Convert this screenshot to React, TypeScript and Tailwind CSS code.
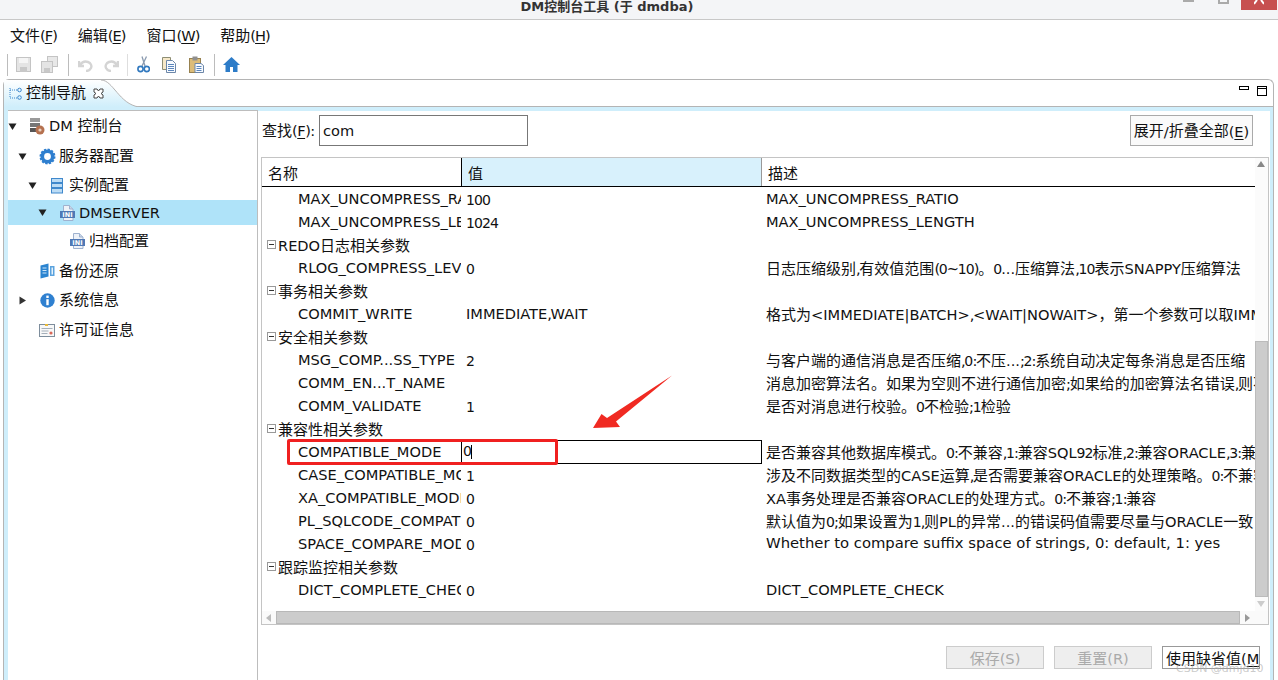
import type { ReactNode } from 'react';

const FONT = "font-['DejaVu_Sans','Noto_Sans_CJK_SC',sans-serif]";

type Row =
  | { group: string }
  | { name: string; value?: string; desc?: string; editing?: boolean };

const rows: Row[] = [
  { name: 'MAX_UNCOMPRESS_RATIO', value: '100', desc: 'MAX_UNCOMPRESS_RATIO' },
  { name: 'MAX_UNCOMPRESS_LENGTH', value: '1024', desc: 'MAX_UNCOMPRESS_LENGTH' },
  { group: 'REDO日志相关参数' },
  { name: 'RLOG_COMPRESS_LEVEL', value: '0', desc: '日志压缩级别,有效值范围(0~10)。0...压缩算法,10表示SNAPPY压缩算法' },
  { group: '事务相关参数' },
  { name: 'COMMIT_WRITE', value: 'IMMEDIATE,WAIT', desc: '格式为<IMMEDIATE|BATCH>,<WAIT|NOWAIT>，第一个参数可以取IMMEDIATE或BATCH' },
  { group: '安全相关参数' },
  { name: 'MSG_COMP...SS_TYPE', value: '2', desc: '与客户端的通信消息是否压缩,0:不压...;2:系统自动决定每条消息是否压缩' },
  { name: 'COMM_EN...T_NAME', value: '', desc: '消息加密算法名。如果为空则不进行通信加密;如果给的加密算法名错误,则不进行加密' },
  { name: 'COMM_VALIDATE', value: '1', desc: '是否对消息进行校验。0不检验;1检验' },
  { group: '兼容性相关参数' },
  { name: 'COMPATIBLE_MODE', value: '0', desc: '是否兼容其他数据库模式。0:不兼容,1:兼容SQL92标准,2:兼容ORACLE,3:兼容MS SQL SERVER', editing: true },
  { name: 'CASE_COMPATIBLE_MODE', value: '1', desc: '涉及不同数据类型的CASE运算,是否需要兼容ORACLE的处理策略。0:不兼容;1:兼容' },
  { name: 'XA_COMPATIBLE_MODE', value: '0', desc: 'XA事务处理是否兼容ORACLE的处理方式。0:不兼容;1:兼容' },
  { name: 'PL_SQLCODE_COMPATIBLE', value: '0', desc: '默认值为0;如果设置为1,则PL的异常...的错误码值需要尽量与ORACLE一致' },
  { name: 'SPACE_COMPARE_MODE', value: '0', desc: 'Whether to compare suffix space of strings, 0: default, 1: yes' },
  { group: '跟踪监控相关参数' },
  { name: 'DICT_COMPLETE_CHECK', value: '0', desc: 'DICT_COMPLETE_CHECK' },
];

const HAN = /[\u4e00-\u9fff]/;

// hanzi run at 15px, digits and punctuation narrow, the rest at the base size
function Txt({ s }: { s: string }) {
  const parts = s.split(/([\u4e00-\u9fff。，]+|[0-9]+|[,;:~()]+)/).filter(Boolean);
  return (
    <>
      {parts.map((p, i) =>
        /^[0-9]/.test(p) ? (
          <span key={i} className="text-[14px] tracking-[-0.9px]">{p}</span>
        ) : /^[,;:~()]/.test(p) ? (
          <span key={i} className="tracking-[-1.300px]">{p}</span>
        ) : /^[\u4e00-\u9fff。，]/.test(p) ? (
          <span key={i} className="text-[15px]">{p}</span>
        ) : (
          <span key={i}>{p}</span>
        ),
      )}
    </>
  );
}

function Key({ c }: { c: string }) {
  return <span className="underline underline-offset-2">{c}</span>;
}

function MenuItem({ label, k }: { label: string; k: string }) {
  return (
    <span>
      <span className="text-[15px]">{label}</span>
      <span className="tracking-[-1px]">(<Key c={k} />)</span>
    </span>
  );
}

function Tri({ open }: { open: boolean }) {
  return (
    <svg width="9" height="9" viewBox="0 0 9 9" className="shrink-0">
      {open ? <path d="M0.5 1.5h8L4.5 8z" fill="#222" /> : <path d="M1.5 0.5v8L8 4.5z" fill="#333" />}
    </svg>
  );
}

function DbIcon() {
  return (
    <svg width="15" height="17" viewBox="0 0 15 17">
      <rect x="0" y="0" width="10" height="4" fill="#9a9a9a" />
      <rect x="0" y="5" width="10" height="4" fill="#777" />
      <rect x="0" y="10" width="8" height="4" fill="#555" />
      <circle cx="10" cy="12" r="4.500" fill="#b5714f" />
      <circle cx="10" cy="12" r="1.600" fill="#e8d2c4" />
    </svg>
  );
}

function GearIcon() {
  return (
    <svg width="17" height="17" viewBox="0 0 17 17">
      <circle cx="8.500" cy="8.500" r="5.200" fill="none" stroke="#2f7fcf" strokeWidth="3.600" />
      <circle cx="8.500" cy="8.500" r="7" fill="none" stroke="#2f7fcf" strokeWidth="2" strokeDasharray="2.200 1.460" />
    </svg>
  );
}

function ListIcon() {
  return (
    <svg width="12" height="16" viewBox="0 0 12 16">
      <g fill="#bcdcf5" stroke="#3f88cc">
        <rect x="0.500" y="0.500" width="11" height="4" />
        <rect x="0.500" y="5.500" width="11" height="4" />
        <rect x="0.500" y="10.500" width="11" height="4.500" />
      </g>
    </svg>
  );
}

function IniIcon() {
  return (
    <svg width="15" height="16" viewBox="0 0 15 16">
      <path d="M3.500 0.500h6l3.500 3.500v11.500h-9.500z" fill="#eef2f8" stroke="#9fb2cf" />
      <path d="M9.500 0.500v3.500h3.500" fill="#c9d6e8" stroke="#9fb2cf" />
      <rect x="0" y="6" width="15" height="7" fill="#4f78b5" />
      <text x="7.500" y="12" textAnchor="middle" fontSize="6.500" fontWeight="700" fill="#fff" fontFamily="DejaVu Sans">INI</text>
    </svg>
  );
}

function BackupIcon() {
  return (
    <svg width="15" height="16" viewBox="0 0 15 16">
      <path d="M0.500 2.500l8-2v13l-8 2z" fill="#2b84d0" />
      <path d="M2.500 5h4M2.500 7.500h4M2.500 10h4" stroke="#cfe6f8" />
      <path d="M10 3h4.500v10H10z" fill="#5ba3de" />
      <path d="M11.500 4.500h1.500v7h-1.500z" fill="#e8f3fb" />
    </svg>
  );
}

function InfoIcon() {
  return (
    <svg width="15" height="15" viewBox="0 0 15 15">
      <circle cx="7.500" cy="7.500" r="7.200" fill="#2f80d0" />
      <rect x="6.300" y="2.600" width="2.400" height="2.400" fill="#fff" />
      <rect x="6.300" y="6.200" width="2.400" height="6" fill="#fff" />
    </svg>
  );
}

function LicenseIcon() {
  return (
    <svg width="16" height="13" viewBox="0 0 16 13">
      <rect x="0.500" y="0.500" width="15" height="12" fill="#f8f8f8" stroke="#7d8d9c" />
      <rect x="6" y="0" width="3" height="2" fill="#e8b93a" />
      <path d="M2.500 4.500h11M2.500 7h7M2.500 9.500h6" stroke="#a4afba" />
      <circle cx="12" cy="9" r="1.600" fill="#d9685a" />
    </svg>
  );
}

function TreeRow({
  pad,
  tri,
  icon,
  h,
  selected,
  children,
}: {
  pad: string;
  tri?: 'open' | 'closed';
  icon: ReactNode;
  h: string;
  selected?: boolean;
  children: ReactNode;
}) {
  return (
    <div className={`flex items-center ${h} ${selected ? 'bg-[#afe3f9]' : ''}`}>
      <div className={`flex ${pad} justify-end pr-[9px]`}>{tri && <Tri open={tri === 'open'} />}</div>
      <div className="flex w-[22px] justify-center">{icon}</div>
      <span className="ml-px whitespace-nowrap">{children}</span>
    </div>
  );
}

function ToolSep({ ml, light }: { ml: string; light?: boolean }) {
  return <div className={`${ml} h-[22px] w-[2px] border-r ${light ? 'border-[#dedede]' : 'border-[#bcbcbc]'}`} />;
}

function ToolIcons() {
  return (
    <div className="flex h-[29px] items-center pl-[6px]">
      <ToolSep ml="ml-0" />
      <svg width="16" height="16" viewBox="0 0 16 16" className="ml-[8px]">
        <rect x="0.500" y="0.500" width="14" height="14" fill="#e4e4e4" stroke="#c4c4c4" />
        <rect x="3" y="1" width="9" height="5" fill="#f5f5f5" />
        <rect x="4" y="10" width="7" height="5" fill="#c8c8c8" />
      </svg>
      <svg width="17" height="17" viewBox="0 0 17 17" className="ml-[9px]">
        <rect x="6.500" y="0.500" width="10" height="10" fill="#e8e8e8" stroke="#c4c4c4" />
        <rect x="0.500" y="5.500" width="11" height="11" fill="#e4e4e4" stroke="#c4c4c4" />
        <rect x="3" y="12" width="6" height="4" fill="#c8c8c8" />
      </svg>
      <ToolSep ml="ml-[9px]" />
      <svg width="16" height="14" viewBox="0 0 16 14" className="ml-[9px]">
        <path d="M1 3v5h5M2 7c2-3 5-4 8-3s4 4 3 6-3 3-5 3" fill="none" stroke="#d4d4d4" strokeWidth="2.400" />
      </svg>
      <svg width="16" height="14" viewBox="0 0 16 14" className="ml-[9px]">
        <path d="M15 3v5h-5M14 7c-2-3-5-4-8-3s-4 4-3 6 3 3 5 3" fill="none" stroke="#d4d4d4" strokeWidth="2.400" />
      </svg>
      <ToolSep ml="ml-[7px]" light />
      <svg width="13" height="17" viewBox="0 0 13 17" className="ml-[9px]">
        <path d="M9.500 0.500L5 10M5 0.500L8 10" stroke="#8b9bb0" strokeWidth="1.300" fill="none" />
        <circle cx="3.500" cy="13" r="2.600" fill="none" stroke="#3279bf" strokeWidth="1.600" />
        <circle cx="9.800" cy="13" r="2.600" fill="none" stroke="#3279bf" strokeWidth="1.600" />
      </svg>
      <svg width="15" height="16" viewBox="0 0 15 16" className="ml-[12px]">
        <path d="M0.500 0.500h8v12h-8z" fill="#f6e8c8" stroke="#8e8e74" />
        <path d="M4.500 3.500h6l3 3v9h-9z" fill="#f8fbff" stroke="#6d87a8" />
        <path d="M6 7.500h6M6 9.500h6M6 11.500h6M6 13.500h6" stroke="#5b86bd" />
      </svg>
      <svg width="15" height="17" viewBox="0 0 15 17" className="ml-[12px]">
        <rect x="0.500" y="2.500" width="11" height="14" fill="#dcbc78" stroke="#97814f" />
        <rect x="3.500" y="0.500" width="5" height="4" fill="#8f8f8f" />
        <path d="M6 7.500h6l2.500 2v7H6z" fill="#f8fbff" stroke="#6d87a8" />
        <path d="M7.500 10.500h5M7.500 12.500h5M7.500 14.500h5" stroke="#5b86bd" />
      </svg>
      <ToolSep ml="ml-[9px]" />
      <svg width="17" height="15" viewBox="0 0 17 15" className="ml-[8px]">
        <path d="M8.500 0L0 8h2.500v7h4.500v-5h3v5h4.500V8H17z" fill="#2d7cc8" />
      </svg>
    </div>
  );
}

function ParamRow({ row }: { row: Row }) {
  if ('group' in row) {
    return (
      <div className="flex h-[23px] items-center pl-[5px] pt-[3px]">
        <div className="mb-[4px] flex h-[9px] w-[9px] items-center justify-center border border-[#999]">
          <div className="h-px w-[5px] bg-[#333]" />
        </div>
        <span className="ml-[2px] whitespace-nowrap"><Txt s={row.group} /></span>
      </div>
    );
  }
  const desc = row.desc ?? '';
  const value = row.value ?? '';
  const isPlainLine = /[a-z]/.test(desc);
  return (
    <div className="flex h-[23px] items-center">
      <div className="w-[199px] shrink-0 overflow-hidden whitespace-nowrap pl-[36px]">{row.name}</div>
      {row.editing ? (
        <div className="flex h-[24px] w-[301px] shrink-0 items-center border border-black pl-[1px]">
          <Txt s={value} />
          <div className="h-[14px] w-px bg-black" />
        </div>
      ) : (
        <div className={`w-[301px] shrink-0 overflow-hidden whitespace-nowrap pl-[5px] ${/^\d+$/.test(value) ? 'pt-[3px]' : 'pt-[1px]'}`}>
          <Txt s={value} />
        </div>
      )}
      <div className={`w-[493px] shrink-0 overflow-hidden whitespace-nowrap pl-[4px] ${HAN.test(desc) ? 'pt-[4px]' : ''}`}>
        {isPlainLine ? <span className="text-[14.800px]">{desc}</span> : <Txt s={desc} />}
      </div>
    </div>
  );
}

function App() {
  return (
    <div className={`relative h-[680px] w-[1278px] overflow-hidden bg-white text-[14.6px] text-[#111] ${FONT}`}>
      {/* title bar */}
      <div className="relative flex h-[20px] justify-center border-b border-[#c8c8c8] bg-[#f4f5f7] pr-[64px]">
        <span className="-mt-[3px] text-[13px] font-bold text-[#333]">DM控制台工具 (于 dmdba)</span>
        <div className="absolute right-[84px] top-0 h-[2px] w-[11px] bg-[#aaa]" />
        <div className="absolute right-[49px] top-0 h-[4px] w-[11px] border-x-2 border-b-2 border-[#aaa]" />
        <div className="absolute right-[1px] top-0 flex h-[10px] w-[36px] items-start justify-center bg-[#c75050]">
          <svg width="10" height="5" viewBox="0 0 10 5"><path d="M0 4l3-4M10 4L7 0" stroke="#fff" strokeWidth="2" /></svg>
        </div>
      </div>

      {/* menu */}
      <div className="flex h-[30px] items-center gap-[21px] pl-[10px] pt-[2px]">
        <MenuItem label="文件" k="F" />
        <MenuItem label="编辑" k="E" />
        <MenuItem label="窗口" k="W" />
        <MenuItem label="帮助" k="H" />
      </div>

      <ToolIcons />

      {/* view */}
      <div className="relative ml-[3px] flex h-[601px] w-[1271px] flex-col rounded-t-[6px] border-x border-t border-[#b4b4b4]">
        <div className="flex h-[27px] shrink-0 items-start justify-between border-b border-[#b4b4b4]">
          <div className="relative flex h-[26px] w-[136px] items-center pl-[5px]">
            <svg width="136" height="27" viewBox="0 0 136 27" className="absolute left-0 top-0">
              <defs>
                <linearGradient id="tab" x1="0" y1="0" x2="0" y2="1">
                  <stop offset="0" stopColor="#ffffff" />
                  <stop offset="1" stopColor="#cfeefb" />
                </linearGradient>
              </defs>
              <path d="M0 27V0h97c12 0 18 24 38 27z" fill="url(#tab)" />
              <path d="M97 0c12 0 18 24 38 27" fill="none" stroke="#b4b4b4" />
            </svg>
            <svg width="13" height="13" viewBox="0 0 13 13" className="relative">
              <path d="M1 1v10h7M1 3h7" fill="none" stroke="#3a86cc" strokeDasharray="1 1" />
              <circle cx="10.500" cy="3" r="1.800" fill="none" stroke="#3a86cc" />
              <circle cx="10.500" cy="10.500" r="1.800" fill="none" stroke="#3a86cc" />
            </svg>
            <span className="relative ml-[4px] whitespace-nowrap text-[15px]">控制导航</span>
            <svg width="11" height="11" viewBox="0 0 11 11" className="relative ml-[7px]">
              <path d="M1 1h3l1.500 2L7 1h3v3L8 5.500 10 7v3H7L5.500 8 4 10H1V7l2-1.500L1 4z" fill="#fff" stroke="#444" />
            </svg>
          </div>
          <div className="flex items-start gap-[8px] pr-[6px] pt-[6px]">
            <div className="h-[4px] w-[10px] border border-black" />
            <div className="h-[10px] w-[10px] border border-black">
              <div className="mt-px h-px bg-black" />
            </div>
          </div>
        </div>
        <div className="flex min-h-0 flex-1 border-l-4 border-r-[3px] border-t-[4px] border-[#cfeefb]">
          {/* tree */}
          <div className="-mt-px w-[250px] shrink-0 border-r border-t border-[#bdbdbd]">
            <TreeRow pad="w-[18px]" tri="open" icon={<DbIcon />} h="h-[30px]">
              DM <Txt s="控制台" />
            </TreeRow>
            <TreeRow pad="w-[28px]" tri="open" icon={<GearIcon />} h="h-[30px]">
              <Txt s="服务器配置" />
            </TreeRow>
            <TreeRow pad="w-[38px]" tri="open" icon={<ListIcon />} h="h-[29px]">
              <Txt s="实例配置" />
            </TreeRow>
            <TreeRow pad="w-[48px]" tri="open" icon={<IniIcon />} h="h-[25px]" selected>
              DMSERVER
            </TreeRow>
            <div className="flex h-[32px] items-center pl-[62px]">
              <IniIcon />
              <span className="ml-[4px] text-[15px]">归档配置</span>
            </div>
            <TreeRow pad="w-[28px]" icon={<BackupIcon />} h="h-[28px]">
              <Txt s="备份还原" />
            </TreeRow>
            <TreeRow pad="w-[28px]" tri="closed" icon={<InfoIcon />} h="h-[30px]">
              <Txt s="系统信息" />
            </TreeRow>
            <TreeRow pad="w-[28px]" icon={<LicenseIcon />} h="h-[30px]">
              <Txt s="许可证信息" />
            </TreeRow>
          </div>

          {/* parameters */}
          <div className="flex min-w-0 flex-1 flex-col">
            <div className="flex h-[39px] shrink-0 items-start justify-between pl-[4px] pr-[17px] pt-[4px]">
              <div className="flex items-center">
                <span className="w-[57px] whitespace-nowrap pt-[2px]"><span className="text-[15px]">查找</span><span className="tracking-[-0.500px]">(<Key c="F" />):</span></span>
                <div className="flex h-[31px] w-[209px] items-center border border-[#777] pl-[3px] pt-px">com</div>
              </div>
              <div className="flex h-[31px] w-[123px] items-center justify-center whitespace-nowrap border border-[#aaa] bg-[#fafafa] pt-[2px]">
                <span className="text-[15px]">展开</span>/<span className="text-[15px]">折叠全部</span>(<Key c="E" />)
              </div>
            </div>
            <div className="ml-[3px] mr-[1px] mt-[7px] flex h-[468px] flex-col border border-[#c4c4c4]">
              <div className="flex min-h-0 flex-1">
                <div className="w-[993px] shrink-0 overflow-hidden">
                  <div className="flex h-[29px] border-b border-black text-[15px]">
                    <div className="w-[200px] border-r border-black pl-[6px] pt-[5px]">名称</div>
                    <div className="w-[300px] border-r border-[#999] bg-[#d8f1fc] pl-[6px] pt-[5px]">值</div>
                    <div className="flex-1 pl-[6px] pt-[5px]">描述</div>
                  </div>
                  {rows.map((row, i) => (
                    <ParamRow key={i} row={row} />
                  ))}
                </div>
                <div className="relative w-[13px] bg-[#fbfbfb]">
                  <div className="absolute left-[2px] top-[3px] h-0 w-0 border-x-[4px] border-b-[6px] border-x-transparent border-b-[#888]" />
                  <div className="absolute bottom-[14px] left-0 top-[183px] w-[13px] border border-[#bbb] bg-[#ccc]" />
                  <div className="absolute bottom-[4px] left-[2px] h-0 w-0 border-x-[4px] border-t-[6px] border-x-transparent border-t-[#ccc]" />
                </div>
              </div>
              <div className="flex h-[13px] shrink-0 items-center bg-[#fafafa]">
                <div className="ml-[4px] h-0 w-0 border-y-[4px] border-r-[5px] border-y-transparent border-r-[#bbb]" />
                <div className="ml-[5px] h-[13px] w-[964px] border border-[#b8b8b8] bg-[#ccc]" />
                <div className="ml-[5px] h-0 w-0 border-y-[4px] border-l-[5px] border-y-transparent border-l-[#999]" />
              </div>
            </div>
            <div className="mt-[21px] flex justify-end gap-[10px] pr-[10px]">
              <div className="flex h-[23px] w-[98px] items-center justify-center border border-[#ccc] bg-[#eee] pt-[3px] text-[#aaa]"><span className="text-[15px]">保存</span>(S)</div>
              <div className="flex h-[23px] w-[98px] items-center justify-center border border-[#ccc] bg-[#eee] pt-[3px] text-[#aaa]"><span className="text-[15px]">重置</span>(R)</div>
              <div className="flex h-[23px] w-[98px] items-center overflow-hidden whitespace-nowrap border border-[#999] pl-[3px] pt-[3px]"><span className="text-[15px]">使用缺省值</span>(<Key c="M" />)</div>
            </div>
          </div>
        </div>
      </div>

      {/* annotations */}
      <div className="absolute left-[287px] top-[439px] h-[26px] w-[271px] rounded-[2px] border-[3px] border-[#f02020]" />
      <svg width="84" height="62" viewBox="0 0 84 62" className="absolute left-[590px] top-[375px]">
        <path d="M82 0.500L17 43l-5.500-4L3 53l27-1-4-5.500z" fill="#f02a22" />
      </svg>
      <span className="absolute left-[1176px] top-[661px] text-[11px] text-[#a8a8a8]/60">CSDN @dmjd10</span>
    </div>
  );
}

export default App;
